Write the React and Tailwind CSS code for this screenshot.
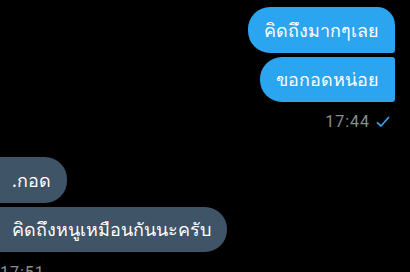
import React from 'react';

const Check = () => (
  <svg width="14" height="12" viewBox="0 0 14 12" fill="none">
    <path d="M1.5 6.8 L5 10 L12.5 1.5" stroke="#3a9fe9" strokeWidth="1.8" strokeLinecap="round" strokeLinejoin="round" />
  </svg>
);

const App = () => {
  return (
    <div
      className="w-[410px] h-[272px] bg-black overflow-hidden flex flex-col"
      style={{ fontFamily: '"Noto Sans", Roboto, sans-serif' }}
    >
      <div className="flex flex-col items-end pt-[7px] pr-[15px] gap-[4px]">
        <div className="h-[46px] flex items-center px-[16px] bg-[#2ca5f1] text-white text-[18px] rounded-l-[22px] rounded-tr-[18px] rounded-br-[3px]">
          คิดถึงมากๆเลย
        </div>
        <div className="h-[45px] flex items-center px-[16px] bg-[#2ca5f1] text-white text-[18px] rounded-l-[22px] rounded-tr-[3px] rounded-br-[3px]">
          ขอกอดหน่อย
        </div>
        <div className="flex items-center gap-[6px] mt-[4px] pr-[5px]">
          <span className="text-[16px] tracking-[1px] text-[#8b8e92]" style={{ fontFamily: 'Roboto, sans-serif' }}>17:44</span>
          <Check />
        </div>
      </div>

      <div className="flex flex-col items-start mt-[23px] gap-[4px]">
        <div className="h-[46px] flex items-center pl-[12px] pr-[16px] bg-[#3f5466] text-white text-[18px] rounded-r-[22px]">
          .กอด
        </div>
        <div className="h-[45px] flex items-center pl-[12px] pr-[16px] bg-[#3f5466] text-white text-[18px] rounded-r-[22px]">
          คิดถึงหนูเหมือนกันนะครับ
        </div>
        <span className="text-[16px] tracking-[1px] text-[#8b8e92] mt-[5px]" style={{ fontFamily: 'Roboto, sans-serif' }}>17:51</span>
      </div>
    </div>
  );
};

export default App;
